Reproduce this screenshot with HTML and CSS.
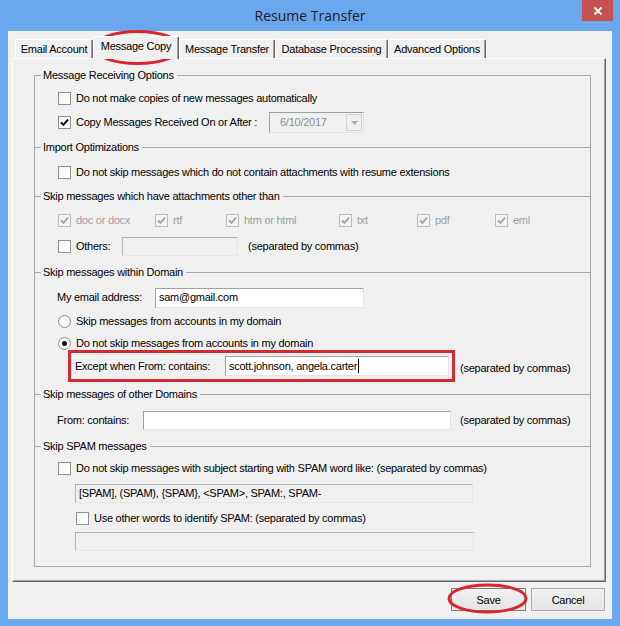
FILE: index.html
```html
<!DOCTYPE html>
<html>
<head>
<meta charset="utf-8">
<title>Resume Transfer</title>
<link rel="stylesheet" href="styles.css">
</head>
<body>
<div class="window">
  <div class="titlebar">
    <span class="title">Resume Transfer</span>
    <div class="close"><svg width="10" height="10" viewBox="0 0 10 10"><path d="M1.5 1.5L8.5 8.5M8.5 1.5L1.5 8.5" stroke="#fff" stroke-width="1.8" fill="none"/></svg></div>
  </div>
  <div class="client">
    <div class="tabs">
      <div class="tab t-email">Email Account</div>
      <div class="tab active t-copy">Message Copy</div>
      <div class="tab t-transfer">Message Transfer</div>
      <div class="tab t-db">Database Processing</div>
      <div class="tab t-adv">Advanced Options</div>
    </div>
    <div class="panel">
      <div class="group">
        <div class="hdr first h22"><span>Message Receiving Options</span></div>
        <div class="row ind h24"><span class="cb"></span><span>Do not make copies of new messages automatically</span></div>
        <div class="row ind h25"><span class="cb"><svg width="9" height="9" viewBox="0 0 9 9"><path d="M1 4.3L3.4 6.8L8 1.6" stroke="#000" stroke-width="1.9" fill="none"/></svg></span><span class="lbl-date">Copy Messages Received On or After :</span><div class="combo"><span>6/10/2017</span><span class="drop"><svg width="7" height="4" viewBox="0 0 7 4"><path d="M0 0H7L3.5 4Z" fill="#a8a8a8"/></svg></span></div></div>

        <div class="hdr h25"><span>Import Optimizations</span></div>
        <div class="row ind h24"><span class="cb"></span><span>Do not skip messages which do not contain attachments with resume extensions</span></div>

        <div class="hdr h24"><span>Skip messages which have attachments other than</span></div>
        <div class="row ind h25 dis-text">
          <div class="ext ext1"><span class="cb dis"><svg width="9" height="9" viewBox="0 0 9 9"><path d="M1 4.3L3.4 6.8L8 1.6" stroke="#a6a6a6" stroke-width="1.9" fill="none"/></svg></span><span>doc or docx</span></div>
          <div class="ext ext2"><span class="cb dis"><svg width="9" height="9" viewBox="0 0 9 9"><path d="M1 4.3L3.4 6.8L8 1.6" stroke="#a6a6a6" stroke-width="1.9" fill="none"/></svg></span><span>rtf</span></div>
          <div class="ext ext3"><span class="cb dis"><svg width="9" height="9" viewBox="0 0 9 9"><path d="M1 4.3L3.4 6.8L8 1.6" stroke="#a6a6a6" stroke-width="1.9" fill="none"/></svg></span><span>htm or html</span></div>
          <div class="ext ext4"><span class="cb dis"><svg width="9" height="9" viewBox="0 0 9 9"><path d="M1 4.3L3.4 6.8L8 1.6" stroke="#a6a6a6" stroke-width="1.9" fill="none"/></svg></span><span>txt</span></div>
          <div class="ext ext5"><span class="cb dis"><svg width="9" height="9" viewBox="0 0 9 9"><path d="M1 4.3L3.4 6.8L8 1.6" stroke="#a6a6a6" stroke-width="1.9" fill="none"/></svg></span><span>pdf</span></div>
          <div class="ext"><span class="cb dis"><svg width="9" height="9" viewBox="0 0 9 9"><path d="M1 4.3L3.4 6.8L8 1.6" stroke="#a6a6a6" stroke-width="1.9" fill="none"/></svg></span><span>eml</span></div>
        </div>
        <div class="row ind h26"><span class="cb"></span><span class="lbl-others">Others:</span><div class="tb dis w-others"></div><span class="sep-others">(separated by commas)</span></div>

        <div class="hdr h26"><span>Skip messages within Domain</span></div>
        <div class="row ind2 h25"><span class="lbl-email">My email address:</span><div class="tb w-email">sam@gmail.com</div></div>
        <div class="row ind h22"><span class="rb"></span><span>Skip messages from accounts in my domain</span></div>
        <div class="row ind h23"><span class="rb on"></span><span>Do not skip messages from accounts in my domain</span></div>
        <div class="row ind-mark h26">
          <div class="mark"><span class="lbl-except">Except when From: contains:</span><div class="tb w-except">scott.johnson, angela.carter<span class="caret"></span></div></div>
          <span class="sep">(separated by commas)</span>
        </div>

        <div class="hdr h26"><span>Skip messages of other Domains</span></div>
        <div class="row ind2 h26"><span class="lbl-from">From: contains:</span><div class="tb w-from"></div><span class="sep-from">(separated by commas)</span></div>

        <div class="hdr h27"><span>Skip SPAM messages</span></div>
        <div class="row ind h17"><span class="cb"></span><span>Do not skip messages with subject starting with SPAM word like: (separated by commas)</span></div>
        <div class="row ind-box h32"><div class="tb dis w-spam">[SPAM], (SPAM), {SPAM}, &lt;SPAM&gt;, SPAM:, SPAM-</div></div>
        <div class="row ind-sub h18"><span class="cb"></span><span>Use other words to identify SPAM: (separated by commas)</span></div>
        <div class="row ind-box h28"><div class="tb dis w-other"></div></div>
      </div>
    </div>
    <div class="buttons">
      <button class="btn default w-save">Save</button>
      <button class="btn w-cancel">Cancel</button>
    </div>
  </div>
  <svg class="marks" width="620" height="626" viewBox="0 0 620 626">
    <ellipse cx="137.5" cy="47.5" rx="43" ry="16" />
    <ellipse cx="487.5" cy="598.5" rx="38.5" ry="13.5" />
  </svg>
</div>
</body>
</html>
```

FILE: styles.css
```css
body {
  margin: 0;
  font-family: "Liberation Sans", Arial, sans-serif;
  font-size: 11px;
  letter-spacing: -0.25px;
  line-height: 13px;
  color: #000;
}

.window {
  position: relative;
  width: 620px;
  height: 626px;
  background: #6ba7ef;
  overflow: hidden;
  display: flex;
  flex-direction: column;
}

.titlebar {
  position: relative;
  height: 31px;
  display: flex;
  align-items: center;
  justify-content: center;
}

.title {
  font-family: "Open Sans", "Noto Sans", sans-serif;
  font-size: 14px;
  letter-spacing: 0;
  color: #1c1c1c;
  line-height: 18px;
  margin-top: 1px;
}

.close {
  position: absolute;
  top: 0;
  right: 7px;
  width: 31px;
  height: 21px;
  background: #c75050;
  display: flex;
  align-items: center;
  justify-content: center;
}

.client {
  margin: 0 8px;
  height: 588px;
  background: #f0f0f0;
  display: flex;
  flex-direction: column;
}

/* tabs */
.tabs {
  display: flex;
  align-items: flex-end;
  height: 22px;
  margin-top: 5px;
  padding-left: 7px;
  position: relative;
  z-index: 1;
}

.tab {
  height: 19px;
  box-sizing: border-box;
  border: 1px solid;
  border-color: #fff #696969 transparent #fff;
  border-bottom: 0;
  border-radius: 2px 2px 0 0;
  box-shadow: inset -1px 0 #a0a0a0;
  background: #f0f0f0;
  display: flex;
  align-items: center;
  justify-content: center;
  padding-top: 1px;
}

.tab.active {
  height: 23px;
  margin-bottom: -1px;
  padding-top: 0;
  padding-bottom: 3px;
}

.t-email { width: 78px; }
.t-copy { width: 86px; }
.t-transfer { width: 96px; }
.t-db { width: 113px; }
.t-adv { width: 98px; }

/* panel */
.panel {
  margin-left: 4px;
  width: 594px;
  height: 524px;
  box-sizing: border-box;
  border: 1px solid;
  border-color: #fff #696969 #696969 #fff;
  box-shadow: inset -1px -1px #a0a0a0;
  display: flex;
  flex-direction: column;
}

.group {
  margin: 16px 0 0 21px;
  width: 557px;
  box-sizing: border-box;
  border: 1px solid #a9a9a9;
  border-top: 0;
  display: flex;
  flex-direction: column;
  padding-bottom: 11px;
}

.hdr {
  display: flex;
  align-items: center;
}

.hdr::before {
  content: "";
  width: 6px;
  border-top: 1px solid #a9a9a9;
  margin-right: 2px;
}

.hdr::after {
  content: "";
  flex: 1;
  border-top: 1px solid #a9a9a9;
  margin-left: 3px;
}

.hdr.first { margin-top: -11px; }

.row {
  display: flex;
  align-items: center;
  white-space: nowrap;
}

.ind { padding-left: 23px; }
.ind2 { padding-left: 22px; }
.ind-mark { padding-left: 33px; }
.ind-box { padding-left: 40px; }
.ind-sub { padding-left: 41px; }

.h17 { height: 17px; }
.h18 { height: 18px; }
.h22 { height: 22px; }
.h23 { height: 23px; }
.h24 { height: 24px; }
.h25 { height: 25px; }
.h26 { height: 26px; }
.h27 { height: 27px; }
.h28 { height: 28px; }
.h32 { height: 32px; }

/* checkbox / radio */
.cb {
  width: 13px;
  height: 13px;
  box-sizing: border-box;
  border: 1px solid #8e8f8f;
  background: linear-gradient(135deg, #f4f4f4, #fff);
  margin-right: 5px;
  flex: none;
  display: flex;
  align-items: center;
  justify-content: center;
}

.cb svg { display: block; }

.cb.dis {
  border-color: #bcbcbc;
  background: #f3f3f3;
}

.dis-text { color: #a0a0a0; }

.rb {
  width: 13px;
  height: 13px;
  box-sizing: border-box;
  border: 1px solid #8e8f8f;
  border-radius: 50%;
  background: radial-gradient(circle at 60% 60%, #fff, #ececec);
  margin-right: 5px;
  flex: none;
  display: flex;
  align-items: center;
  justify-content: center;
}

.rb.on::after {
  content: "";
  width: 5px;
  height: 5px;
  border-radius: 50%;
  background: #151515;
}

.ext {
  display: flex;
  align-items: center;
}

.ext1 { width: 97px; }
.ext2 { width: 71px; }
.ext3 { width: 113px; }
.ext4 { width: 78px; }
.ext5 { width: 78px; }

/* labels */
.lbl-date { width: 193px; }
.lbl-others { width: 46px; }
.lbl-email { width: 98px; }
.lbl-except { width: 150px; }
.lbl-from { width: 86px; }

.sep-others { margin-left: 10px; }
.sep { margin-left: 5px; }
.sep-from { margin-left: 9px; }

/* text boxes */
.tb {
  height: 20px;
  box-sizing: border-box;
  border: 1px solid;
  border-color: #a0a0a0 #e3e3e3 #e3e3e3 #a0a0a0;
  background: #fff;
  padding-left: 3px;
  display: flex;
  align-items: center;
  flex: none;
}

.tb.dis {
  background: #f0f0f0;
  border-color: #b4b4b4 #e6e6e6 #e6e6e6 #b4b4b4;
}

.w-others { width: 116px; height: 19px; }
.w-email { width: 209px; }
.w-except { width: 224px; }
.w-from { width: 308px; height: 19px; }
.w-spam { width: 398px; height: 19px; }
.w-other { width: 399px; height: 19px; }

.caret {
  width: 1px;
  height: 14px;
  background: #000;
  margin-left: 1px;
}

.combo {
  width: 95px;
  height: 21px;
  box-sizing: border-box;
  border: 1px solid;
  border-color: #a0a0a0 #e3e3e3 #e3e3e3 #a0a0a0;
  background: #f0f0f0;
  color: #8d8d8d;
  display: flex;
  align-items: center;
  padding-left: 10px;
  flex: none;
}

.combo span:first-child { flex: 1; }

.drop {
  width: 16px;
  height: 17px;
  box-sizing: border-box;
  border: 1px solid #d4d4d4;
  background: #f0f0f0;
  margin-right: 1px;
  display: flex;
  align-items: center;
  justify-content: center;
}

.drop svg { display: block; }

/* annotation box */
.mark {
  width: 387px;
  height: 32px;
  box-sizing: border-box;
  border: 3px solid #d42a33;
  padding-left: 4px;
  display: flex;
  align-items: center;
  margin-bottom: 4px;
  flex: none;
}

/* buttons */
.buttons {
  display: flex;
  justify-content: flex-end;
  gap: 5px;
  margin-top: 6px;
  padding-right: 7px;
}

.btn {
  height: 23px;
  box-sizing: border-box;
  border: 1px solid #acacac;
  background: linear-gradient(#f0f0f0, #e5e5e5);
  font-family: inherit;
  font-size: 11px;
  letter-spacing: -0.25px;
  color: #000;
  padding: 0;
}

.btn.default { border-color: #7c7c7c; }

.w-save { width: 75px; }
.w-cancel { width: 74px; }

.marks {
  position: absolute;
  top: 0;
  left: 0;
  pointer-events: none;
}

.marks ellipse {
  fill: none;
  stroke: #d8262e;
  stroke-width: 3;
}
```
